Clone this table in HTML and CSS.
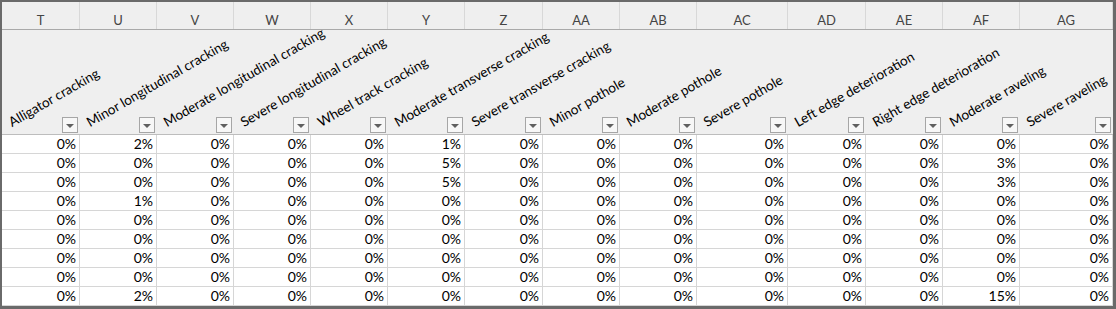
FILE: index.html
```html
<!DOCTYPE html>
<html lang="en">
<head>
<meta charset="utf-8">
<title>Distress survey</title>
<link rel="stylesheet" href="styles.css">
</head>
<body>
<div class="sheet">
  <div class="row letters">
    <div class="cell">T</div><div class="cell">U</div><div class="cell">V</div><div class="cell">W</div>
    <div class="cell">X</div><div class="cell">Y</div><div class="cell">Z</div><div class="cell">AA</div>
    <div class="cell">AB</div><div class="cell">AC</div><div class="cell">AD</div><div class="cell">AE</div>
    <div class="cell">AF</div><div class="cell">AG</div>
  </div>
  <div class="row titles">
    <div class="cell"><span class="label">Alligator cracking</span><span class="filter"></span></div>
    <div class="cell"><span class="label">Minor longitudinal cracking</span><span class="filter"></span></div>
    <div class="cell"><span class="label">Moderate longitudinal cracking</span><span class="filter"></span></div>
    <div class="cell"><span class="label">Severe longitudinal cracking</span><span class="filter"></span></div>
    <div class="cell"><span class="label">Wheel track cracking</span><span class="filter"></span></div>
    <div class="cell"><span class="label">Moderate transverse cracking</span><span class="filter"></span></div>
    <div class="cell"><span class="label">Severe transverse cracking</span><span class="filter"></span></div>
    <div class="cell"><span class="label">Minor pothole</span><span class="filter"></span></div>
    <div class="cell"><span class="label">Moderate pothole</span><span class="filter"></span></div>
    <div class="cell"><span class="label">Severe pothole</span><span class="filter"></span></div>
    <div class="cell"><span class="label">Left edge deterioration</span><span class="filter"></span></div>
    <div class="cell"><span class="label">Right edge deterioration</span><span class="filter"></span></div>
    <div class="cell"><span class="label">Moderate raveling</span><span class="filter"></span></div>
    <div class="cell"><span class="label">Severe raveling</span><span class="filter"></span></div>
  </div>
  <div class="row data">
    <div class="cell">0%</div><div class="cell">2%</div><div class="cell">0%</div><div class="cell">0%</div><div class="cell">0%</div><div class="cell">1%</div><div class="cell">0%</div><div class="cell">0%</div><div class="cell">0%</div><div class="cell">0%</div><div class="cell">0%</div><div class="cell">0%</div><div class="cell">0%</div><div class="cell">0%</div>
  </div>
  <div class="row data">
    <div class="cell">0%</div><div class="cell">0%</div><div class="cell">0%</div><div class="cell">0%</div><div class="cell">0%</div><div class="cell">5%</div><div class="cell">0%</div><div class="cell">0%</div><div class="cell">0%</div><div class="cell">0%</div><div class="cell">0%</div><div class="cell">0%</div><div class="cell">3%</div><div class="cell">0%</div>
  </div>
  <div class="row data">
    <div class="cell">0%</div><div class="cell">0%</div><div class="cell">0%</div><div class="cell">0%</div><div class="cell">0%</div><div class="cell">5%</div><div class="cell">0%</div><div class="cell">0%</div><div class="cell">0%</div><div class="cell">0%</div><div class="cell">0%</div><div class="cell">0%</div><div class="cell">3%</div><div class="cell">0%</div>
  </div>
  <div class="row data">
    <div class="cell">0%</div><div class="cell">1%</div><div class="cell">0%</div><div class="cell">0%</div><div class="cell">0%</div><div class="cell">0%</div><div class="cell">0%</div><div class="cell">0%</div><div class="cell">0%</div><div class="cell">0%</div><div class="cell">0%</div><div class="cell">0%</div><div class="cell">0%</div><div class="cell">0%</div>
  </div>
  <div class="row data">
    <div class="cell">0%</div><div class="cell">0%</div><div class="cell">0%</div><div class="cell">0%</div><div class="cell">0%</div><div class="cell">0%</div><div class="cell">0%</div><div class="cell">0%</div><div class="cell">0%</div><div class="cell">0%</div><div class="cell">0%</div><div class="cell">0%</div><div class="cell">0%</div><div class="cell">0%</div>
  </div>
  <div class="row data">
    <div class="cell">0%</div><div class="cell">0%</div><div class="cell">0%</div><div class="cell">0%</div><div class="cell">0%</div><div class="cell">0%</div><div class="cell">0%</div><div class="cell">0%</div><div class="cell">0%</div><div class="cell">0%</div><div class="cell">0%</div><div class="cell">0%</div><div class="cell">0%</div><div class="cell">0%</div>
  </div>
  <div class="row data">
    <div class="cell">0%</div><div class="cell">0%</div><div class="cell">0%</div><div class="cell">0%</div><div class="cell">0%</div><div class="cell">0%</div><div class="cell">0%</div><div class="cell">0%</div><div class="cell">0%</div><div class="cell">0%</div><div class="cell">0%</div><div class="cell">0%</div><div class="cell">0%</div><div class="cell">0%</div>
  </div>
  <div class="row data">
    <div class="cell">0%</div><div class="cell">0%</div><div class="cell">0%</div><div class="cell">0%</div><div class="cell">0%</div><div class="cell">0%</div><div class="cell">0%</div><div class="cell">0%</div><div class="cell">0%</div><div class="cell">0%</div><div class="cell">0%</div><div class="cell">0%</div><div class="cell">0%</div><div class="cell">0%</div>
  </div>
  <div class="row data">
    <div class="cell">0%</div><div class="cell">2%</div><div class="cell">0%</div><div class="cell">0%</div><div class="cell">0%</div><div class="cell">0%</div><div class="cell">0%</div><div class="cell">0%</div><div class="cell">0%</div><div class="cell">0%</div><div class="cell">0%</div><div class="cell">0%</div><div class="cell">15%</div><div class="cell">0%</div>
  </div>
</div>
</body>
</html>
```

FILE: styles.css
```css
html, body {
  margin: 0;
  padding: 0;
  background: #6a6a6a;
}

.sheet {
  margin: 2px 3px 3px 2px;
  width: 1111px;
  background: #ffffff;
  font-family: Lato, "Open Sans", sans-serif;
  color: #000;
}

.row {
  display: grid;
  grid-template-columns: 78px 77px 77px 77px 77px 77px 78px 77px 77px 91px 78px 77px 77px 93px;
}

/* column letters */
.letters {
  height: 28px;
  background: #efefef;
  border-bottom: 1px solid #a9a9a9;
  box-sizing: border-box;
  position: relative;
  z-index: 1;
}

.letters .cell {
  border-right: 1px solid #d8d8d8;
  text-align: center;
  font-size: 13px;
  color: #444;
  padding-top: 11px;
  line-height: 14px;
}

/* rotated table titles with filter buttons */
.titles {
  height: 105px;
  background: #efefef;
  border-bottom: 1px solid #bdbdbd;
  box-sizing: border-box;
}

.titles .cell {
  display: flex;
  align-items: flex-end;
  justify-content: space-between;
  padding: 0 2px 1px 11px;
}

.label {
  display: block;
  width: 0;
  white-space: nowrap;
  font-size: 13.5px;
  line-height: 14px;
  margin-bottom: 4px;
  transform-origin: 0 100%;
  transform: rotate(-30deg);
}

.filter {
  flex: none;
  width: 16px;
  height: 16px;
  box-sizing: border-box;
  border: 1px solid #a6a6a6;
  background: #f7f7f7;
  display: flex;
  align-items: center;
  justify-content: center;
}

.filter::after {
  content: "";
  width: 0;
  height: 0;
  border-left: 4px solid transparent;
  border-right: 4px solid transparent;
  border-top: 4px solid #606060;
  margin-top: 1px;
}

/* numeric rows */
.data {
  height: 19px;
}

.data .cell {
  border-right: 1px solid #d6d6d6;
  border-bottom: 1px solid #d6d6d6;
  text-align: right;
  font-size: 14px;
  line-height: 18px;
  padding-right: 3px;
}
```
